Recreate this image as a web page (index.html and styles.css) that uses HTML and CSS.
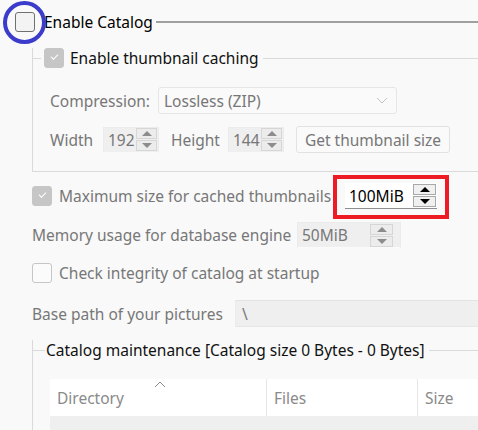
FILE: index.html
```html
<!DOCTYPE html>
<html lang="en">
<head>
    <meta charset="UTF-8">
    <title>Catalog settings</title>
    <link rel="stylesheet" href="styles.css">
</head>
<body>
    <div id="page">
        <div class="catalog-head">
            <span class="box"></span>
            <span class="head-title">Enable Catalog</span>
            <span class="head-line"></span>
            <span class="mark-circle"></span>
        </div>

        <div class="content">
            <div class="group thumbs">
                <div class="group-head">
                    <span class="tick"></span>
                    <span class="box checked"></span>
                    <span class="group-title">Enable thumbnail caching</span>
                    <span class="group-line"></span>
                </div>
                <div class="row compression-row">
                    <span class="label compression-label">Compression:</span>
                    <div class="combo">
                        <span>Lossless (ZIP)</span>
                        <svg class="chevron" width="12" height="7" viewBox="0 0 12 7"><path d="M1 1 L6 6 L11 1" fill="none" stroke="#c4c4c4" stroke-width="1"/></svg>
                    </div>
                </div>
                <div class="row size-row">
                    <span class="label width-label">Width</span>
                    <div class="spin small">
                        <span class="spin-value">192</span>
                        <span class="spin-btns"><span class="up"></span><span class="down"></span></span>
                    </div>
                    <span class="label height-label">Height</span>
                    <div class="spin small">
                        <span class="spin-value">144</span>
                        <span class="spin-btns"><span class="up"></span><span class="down"></span></span>
                    </div>
                    <button class="get-size">Get thumbnail size</button>
                </div>
            </div>

            <div class="row max-row">
                <span class="box checked"></span>
                <span class="label max-label">Maximum size for cached thumbnails</span>
                <div class="spin active">
                    <span class="spin-value">100MiB</span>
                    <span class="spin-btns"><span class="up"></span><span class="down"></span></span>
                    <span class="mark-rect"></span>
                </div>
            </div>

            <div class="row mem-row">
                <span class="label mem-label">Memory usage for database engine</span>
                <div class="spin mem">
                    <span class="spin-value">50MiB</span>
                    <span class="spin-btns"><span class="up"></span><span class="down"></span></span>
                </div>
            </div>

            <div class="row check-row">
                <span class="box"></span>
                <span class="label">Check integrity of catalog at startup</span>
            </div>

            <div class="row path-row">
                <span class="label path-label">Base path of your pictures</span>
                <div class="path-edit">\</div>
            </div>

            <div class="group maintenance">
                <div class="group-head">
                    <span class="tick wide"></span>
                    <span class="group-title">Catalog maintenance [Catalog size 0 Bytes - 0 Bytes]</span>
                    <span class="group-line"></span>
                </div>
                <div class="table">
                    <div class="table-head">
                        <div class="col dir">Directory
                            <svg class="sort" width="12" height="7" viewBox="0 0 12 7"><path d="M1 6 L6 1 L11 6" fill="none" stroke="#8a8a8a" stroke-width="1"/></svg>
                        </div>
                        <div class="col files">Files</div>
                        <div class="col size">Size</div>
                    </div>
                    <div class="table-body"></div>
                </div>
            </div>
        </div>
    </div>
</body>
</html>
```

FILE: styles.css
```css
body {
    margin: 0;
    background-color: #f9f9f9;
    font-family: 'Noto Sans', 'DejaVu Sans', sans-serif;
    font-size: 15.5px;
    color: #777;
    overflow: hidden;
}
#page {
    width: 478px;
    height: 430px;
    overflow: hidden;
}
.box {
    box-sizing: border-box;
    width: 20px;
    height: 20px;
    border: 1px solid #c6c6c6;
    border-radius: 3px;
    background-color: #fbfbfb;
    flex: none;
    position: relative;
}
.box.checked {
    background-color: #c6c6c6;
    border-color: #c6c6c6;
}
.box.checked::after {
    content: '';
    position: absolute;
    left: 6px;
    top: 5px;
    width: 6px;
    height: 3px;
    border-left: 1px solid #fff;
    border-bottom: 1px solid #fff;
    transform: rotate(-45deg);
}
.catalog-head {
    position: relative;
    display: flex;
    align-items: center;
    height: 26px;
    margin-top: 9px;
    padding-left: 15px;
}
.catalog-head .box {
    border-color: #707070;
    background-color: #f3f3f3;
}
.head-title {
    color: #000;
    margin-left: 9px;
}
.head-line {
    flex: 1;
    height: 2px;
    background-color: #a0a0a0;
    margin-left: 3px;
}
.mark-circle {
    position: absolute;
    left: 3px;
    top: -8px;
    width: 35px;
    height: 35px;
    border: 4px solid #3b3bcc;
    border-radius: 50%;
}
.content {
    padding-left: 32px;
}
.group {
    border-left: 1px solid #dadada;
}
.group.thumbs {
    border-bottom: 1px solid #dadada;
    margin-top: 23px;
    padding-left: 17px;
    padding-bottom: 18px;
}
.group-head {
    display: flex;
    align-items: center;
    height: 20px;
    margin-top: -10px;
    margin-left: -17px;
}
.tick {
    width: 8px;
    height: 1px;
    background-color: #dadada;
    margin-right: 3px;
}
.tick.wide {
    width: 12px;
    margin-right: 1px;
}
.group-title {
    color: #111;
    margin-left: 6px;
    white-space: nowrap;
}
.maintenance .group-title {
    margin-left: 0;
}
.group-line {
    flex: 1;
    height: 1px;
    background-color: #dadada;
    margin-left: 4px;
}
.row {
    display: flex;
    align-items: center;
}
.label {
    white-space: nowrap;
    flex: none;
}
.compression-row {
    margin-top: 19px;
    height: 27px;
}
.compression-label {
    width: 108px;
}
.combo {
    box-sizing: border-box;
    width: 239px;
    height: 27px;
    border: 1px solid #e6e6e6;
    border-radius: 3px;
    background-color: #fafafa;
    display: flex;
    align-items: center;
    padding-left: 5px;
    padding-right: 8px;
}
.combo span {
    flex: 1;
}
.size-row {
    margin-top: 12px;
    height: 27px;
}
.width-label {
    width: 53px;
}
.height-label {
    width: 57px;
    margin-left: 12px;
}
.spin {
    box-sizing: border-box;
    display: flex;
    height: 26px;
    background-color: #efefef;
    border: 1px solid #ebebeb;
    border-bottom-color: #fafafa;
    position: relative;
}
.spin.small {
    width: 56px;
}
.spin-value {
    flex: 1;
    display: flex;
    align-items: center;
    padding-left: 4px;
}
.spin-btns {
    display: flex;
    flex-direction: column;
    justify-content: center;
    gap: 1px;
    width: 21px;
    padding-right: 1px;
}
.spin-btns span {
    box-sizing: border-box;
    height: 11px;
    border: 1px solid #d6d6d6;
    background-color: #ececec;
    position: relative;
}
.spin-btns span::after {
    content: '';
    position: absolute;
    left: 50%;
    top: 2px;
    margin-left: -5px;
    border-left: 5px solid transparent;
    border-right: 5px solid transparent;
}
.spin-btns .up::after {
    border-bottom: 5px solid #8c8c8c;
}
.spin-btns .down::after {
    border-top: 5px solid #8c8c8c;
}
.get-size {
    box-sizing: border-box;
    margin-left: 12px;
    width: 154px;
    height: 27px;
    border: 1px solid #e2e2e2;
    border-radius: 3px;
    background-color: #fafafa;
    color: #777;
    font-family: inherit;
    font-size: inherit;
    padding: 0;
}
.max-row {
    margin-top: 11px;
    height: 26px;
}
.max-label {
    width: 286px;
    margin-left: 7px;
}
.spin.active {
    width: 92px;
    background-color: #fff;
    border: none;
    border-bottom: 1px solid #8e8e8e;
    color: #000;
}
.spin.active .spin-btns {
    width: 23px;
}
.spin.active .spin-btns span {
    border-color: #a8a8a8;
    background-color: #f0f0f0;
}
.spin.active .up::after {
    border-bottom-color: #000;
}
.spin.active .down::after {
    border-top-color: #000;
}
.mark-rect {
    position: absolute;
    left: -12px;
    right: -12px;
    top: -8px;
    bottom: -11px;
    border: 4px solid #ed1c24;
}
.mem-row {
    margin-top: 13px;
    height: 26px;
}
.mem-label {
    width: 265px;
}
.spin.mem {
    width: 104px;
}
.spin.mem .spin-btns {
    width: 23px;
    padding-right: 7px;
}
.check-row {
    margin-top: 15px;
    height: 20px;
}
.check-row .label {
    margin-left: 7px;
}
.path-row {
    margin-top: 17px;
    height: 27px;
}
.path-label {
    width: 203px;
}
.path-edit {
    box-sizing: border-box;
    flex: 1;
    height: 27px;
    background-color: #efefef;
    border-top: 1px solid #e2e2e2;
    border-bottom: 1px solid #e6e6e6;
    border-left: 1px solid #ececec;
    padding-left: 6px;
    display: flex;
    align-items: center;
}
.group.maintenance {
    margin-top: 22px;
    padding-left: 17px;
    height: 120px;
}
.maintenance .group-head {
    margin-top: -9px;
}
.table {
    margin-top: 19px;
    background-color: #efefef;
    height: 80px;
}
.table-head {
    display: flex;
    height: 37px;
    background-color: #fff;
}
.col {
    display: flex;
    align-items: center;
    padding-left: 7px;
    border-right: 1px solid #e6e6e6;
    color: #8a8a8a;
    position: relative;
}
.col.dir {
    width: 209px;
}
.col.files {
    width: 143px;
}
.col.size {
    flex: 1;
    border-right: none;
}
.sort {
    position: absolute;
    left: 104px;
    top: 2px;
}
```
